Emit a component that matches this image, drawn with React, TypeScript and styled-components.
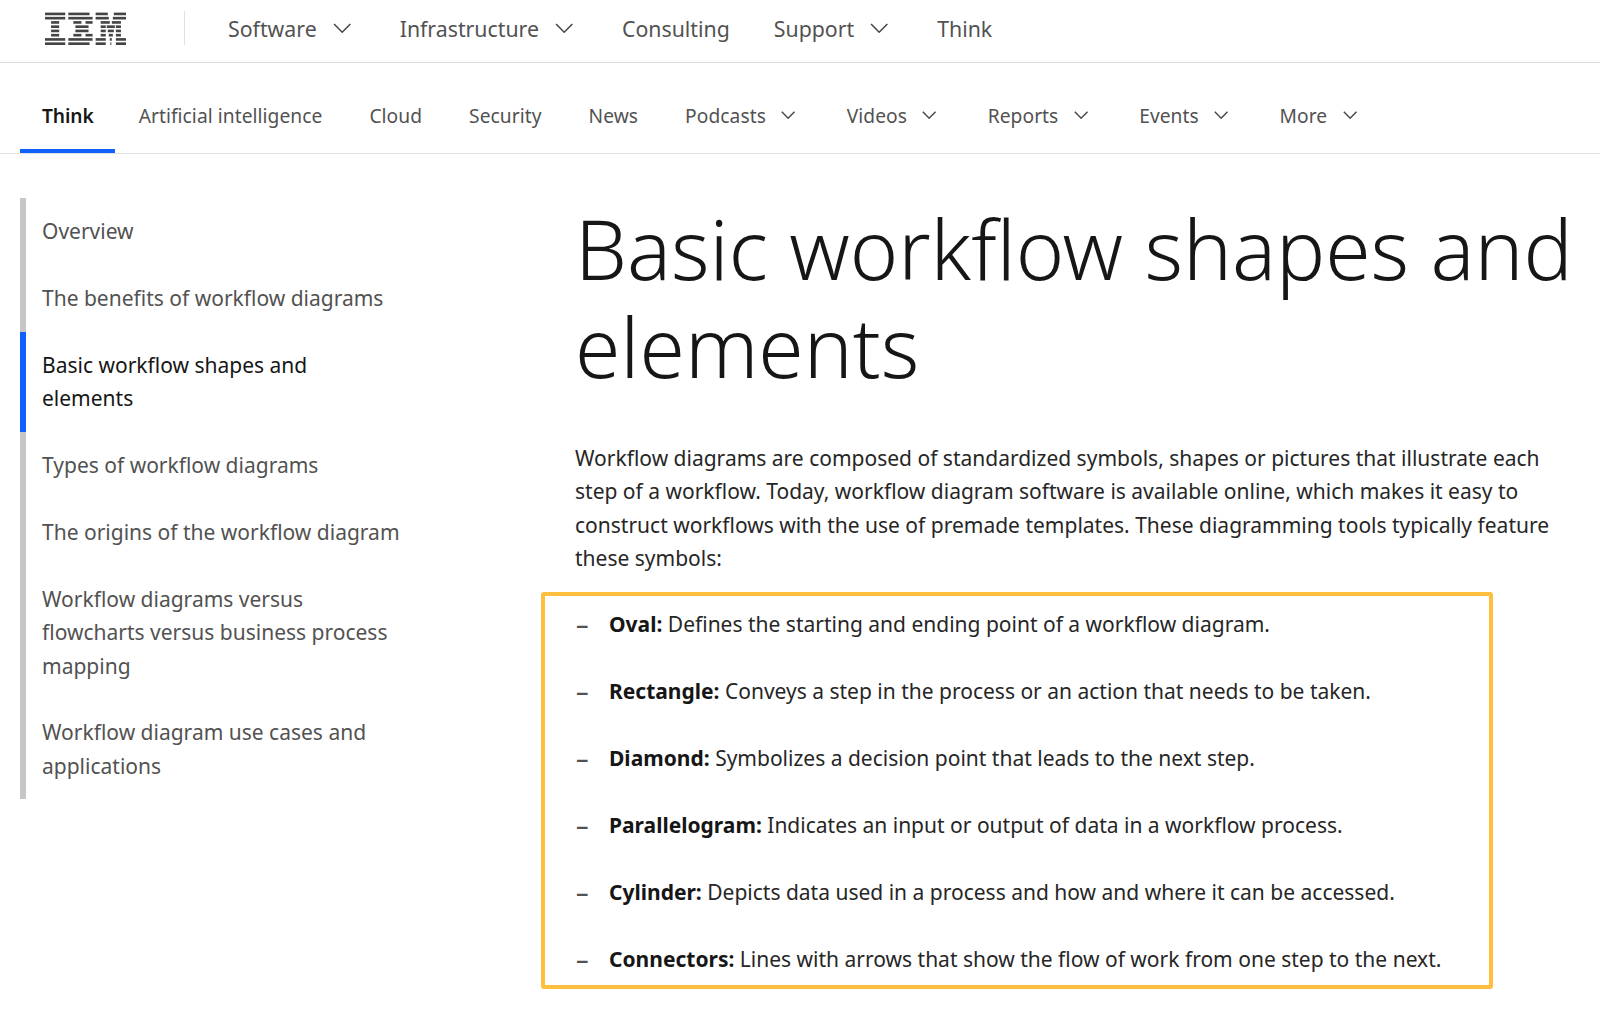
import React from 'react';
import styled, { createGlobalStyle } from 'styled-components';

const GlobalStyle = createGlobalStyle`
  html, body {
    margin: 0;
    padding: 0;
    background: #fff;
  }
  body {
    height: 1009px;
    overflow: hidden;
    font-family: "Noto Sans", "Liberation Sans", sans-serif;
    color: #161616;
  }
  * {
    box-sizing: border-box;
  }
`;

const logoRows: [number, number][][] = [
  [[0, 20], [23, 44], [50, 62], [68, 80]],
  [[0, 20], [23, 47], [50, 63], [67, 80]],
  [[6, 14], [28, 36], [40, 47], [55, 64], [66, 75]],
  [[6, 14], [30, 43], [55, 60], [61, 69], [70, 75]],
  [[6, 14], [30, 43], [55, 60], [62, 68], [70, 75]],
  [[6, 14], [28, 36], [40, 47], [55, 60], [63, 67], [70, 75]],
  [[0, 20], [23, 47], [50, 60], [64, 66], [70, 80]],
  [[0, 20], [23, 44], [50, 60], [64.5, 65.5], [70, 80]],
];

const IbmLogo = () => (
  <LogoSvg viewBox="0 0 80 32" aria-label="IBM">
    {logoRows.map((row, r) =>
      row.map(([a, b]) => (
        <rect key={`${r}-${a}`} x={a} y={r * 4.2 + 0.3} width={b - a} height={2.6} fill="#444" />
      ))
    )}
  </LogoSvg>
);

const Chevron = ({ large }: { large?: boolean }) => (
  <ChevronSvg viewBox="0 0 18 10" $large={large}>
    <polyline points="1,1 9,9 17,1" />
  </ChevronSvg>
);

const topLinks = [
  { label: 'Software', menu: true },
  { label: 'Infrastructure', menu: true },
  { label: 'Consulting', menu: false },
  { label: 'Support', menu: true },
  { label: 'Think', menu: false },
];

const tabs = [
  { label: 'Think', active: true },
  { label: 'Artificial intelligence' },
  { label: 'Cloud' },
  { label: 'Security' },
  { label: 'News' },
  { label: 'Podcasts', menu: true },
  { label: 'Videos', menu: true },
  { label: 'Reports', menu: true },
  { label: 'Events', menu: true },
  { label: 'More', menu: true },
];

const sideItems = [
  'Overview',
  'The benefits of workflow diagrams',
  'Basic workflow shapes and elements',
  'Types of workflow diagrams',
  'The origins of the workflow diagram',
  'Workflow diagrams versus flowcharts versus business process mapping',
  'Workflow diagram use cases and applications',
];

const shapes = [
  ['Oval:', 'Defines the starting and ending point of a workflow diagram.'],
  ['Rectangle:', 'Conveys a step in the process or an action that needs to be taken.'],
  ['Diamond:', 'Symbolizes a decision point that leads to the next step.'],
  ['Parallelogram:', 'Indicates an input or output of data in a workflow process.'],
  ['Cylinder:', 'Depicts data used in a process and how and where it can be accessed.'],
  ['Connectors:', 'Lines with arrows that show the flow of work from one step to the next.'],
];

export default function App() {
  return (
    <>
      <GlobalStyle />
      <TopNav>
        <LogoCell>
          <IbmLogo />
        </LogoCell>
        <TopLinks>
          {topLinks.map((link) => (
            <TopLink key={link.label}>
              {link.label}
              {link.menu && <Chevron large />}
            </TopLink>
          ))}
        </TopLinks>
      </TopNav>
      <TabBar>
        {tabs.map((tab) => (
          <TabItem key={tab.label} $active={tab.active}>
            {tab.label}
            {tab.menu && <Chevron />}
          </TabItem>
        ))}
      </TabBar>
      <Content>
        <SideNav>
          {sideItems.map((item) => {
            const current = item.startsWith('Basic');
            return (
              <SideItem key={item} $current={current}>
                {item}
              </SideItem>
            );
          })}
        </SideNav>
        <Article>
          <Heading>Basic workflow shapes and elements</Heading>
          <Intro>
            Workflow diagrams are composed of standardized symbols, shapes or pictures that
            illustrate each step of a workflow. Today, workflow diagram software is available
            online, which makes it easy to construct workflows with the use of premade templates.
            These diagramming tools typically feature these symbols:
          </Intro>
          <ShapeBox>
            {shapes.map(([name, text]) => (
              <ShapeItem key={name}>
                <Dash>–</Dash>
                <span>
                  <strong>{name}</strong> {text}
                </span>
              </ShapeItem>
            ))}
          </ShapeBox>
        </Article>
      </Content>
    </>
  );
}

const TopNav = styled.header`
  display: flex;
  align-items: center;
  height: 63px;
  padding-bottom: 6px;
  border-bottom: 1px solid #dcdcdc;
`;

const LogoCell = styled.div`
  display: flex;
  align-items: center;
  width: 185px;
  height: 34px;
  padding-left: 45px;
  border-right: 1px solid #e0e0e0;
`;

const LogoSvg = styled.svg`
  width: 81px;
  height: 33px;
`;

const TopLinks = styled.nav`
  display: flex;
  align-items: center;
  gap: 44px;
  margin-left: 43px;
`;

const TopLink = styled.a`
  display: flex;
  align-items: center;
  gap: 16px;
  font-size: 21.3px;
  color: #525252;
`;

const ChevronSvg = styled.svg<{ $large?: boolean }>`
  width: ${(p) => (p.$large ? 18.4 : 14.3)}px;
  height: ${(p) => (p.$large ? 10.2 : 8)}px;
  margin-right: ${(p) => (p.$large ? 4.6 : 4)}px;

  polyline {
    fill: none;
    stroke: #444;
    stroke-width: ${(p) => (p.$large ? 1.5 : 1.8)};
  }
`;

const TabBar = styled.nav`
  display: flex;
  height: 91px;
  padding-left: 20px;
  border-bottom: 1px solid #e0e0e0;
`;

const TabItem = styled.a<{ $active?: boolean }>`
  display: flex;
  align-items: center;
  gap: 15.5px;
  height: 90px;
  padding: 18px ${(p) => (p.$active ? 21 : 23)}px 0 ${(p) => (p.$active ? 22 : 24)}px;
  font-size: 19.2px;
  letter-spacing: ${(p) => (p.$active ? -0.1 : 0.06)}px;
  font-weight: ${(p) => (p.$active ? 600 : 400)};
  color: ${(p) => (p.$active ? '#161616' : '#525252')};
  border-bottom: 4px solid ${(p) => (p.$active ? '#0f62fe' : 'transparent')};
`;

const Content = styled.main`
  display: flex;
  padding: 44px 0 0 20px;
`;

const SideNav = styled.aside`
  flex: none;
  width: 555px;
`;

const SideItem = styled.div<{ $current: boolean }>`
  width: 382px;
  padding: 17.3px 0 16.1px 16px;
  border-left: 6px solid ${(p) => (p.$current ? '#0f62fe' : '#c6c6c6')};
  font-size: 21px;
  line-height: 33.4px;
  color: ${(p) => (p.$current ? '#161616' : '#525252')};
`;

const Article = styled.article`
  flex: 1;
  min-width: 0;
  padding-right: 14px;
`;

const Heading = styled.h1`
  margin: 1px 0 47px;
  font-size: 82.2px;
  font-weight: 300;
  line-height: 98px;
`;

const Intro = styled.p`
  margin: 0 0 16px;
  font-size: 21px;
  line-height: 33.4px;
  color: #262626;
`;

const ShapeBox = styled.ul`
  width: 951.5px;
  height: 397px;
  margin: 0 0 0 -34px;
  padding: 12px 0 0 31px;
  list-style: none;
  border: 4px solid #ffbe3d;
  border-radius: 3px;
`;

const ShapeItem = styled.li`
  display: flex;
  height: 67px;
  font-size: 21px;
  line-height: 33.4px;
  color: #262626;

  strong {
    font-weight: 700;
    color: #161616;
  }
`;

const Dash = styled.span`
  flex: none;
  width: 33px;
  font-size: 25px;
  font-weight: 500;
  color: #525252;
`;
